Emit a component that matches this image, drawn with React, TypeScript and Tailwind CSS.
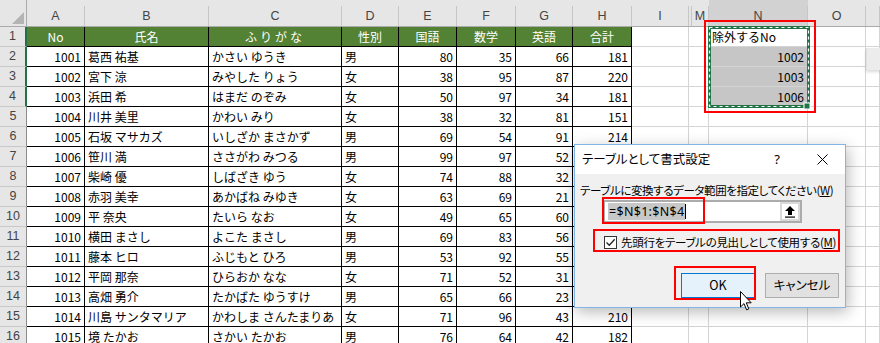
import React from "react";

type Row = [string, string, string, string, number, number, number, number];

const data: Row[] = [
  ["1001", "葛西 祐基", "かさい ゆうき", "男", 80, 35, 66, 181],
  ["1002", "宮下 涼", "みやした りょう", "女", 38, 95, 87, 220],
  ["1003", "浜田 希", "はまだ のぞみ", "女", 50, 97, 34, 181],
  ["1004", "川井 美里", "かわい みり", "女", 38, 32, 81, 151],
  ["1005", "石坂 マサカズ", "いしざか まさかず", "男", 69, 54, 91, 214],
  ["1006", "笹川 満", "ささがわ みつる", "男", 99, 97, 52, 248],
  ["1007", "柴崎 優", "しばざき ゆう", "女", 74, 88, 32, 194],
  ["1008", "赤羽 美幸", "あかばね みゆき", "女", 63, 69, 21, 153],
  ["1009", "平 奈央", "たいら なお", "女", 49, 65, 60, 174],
  ["1010", "横田 まさし", "よこた まさし", "男", 69, 83, 56, 208],
  ["1011", "藤本 ヒロ", "ふじもと ひろ", "男", 53, 92, 55, 200],
  ["1012", "平岡 那奈", "ひらおか なな", "女", 71, 52, 31, 154],
  ["1013", "高畑 勇介", "たかばた ゆうすけ", "男", 65, 66, 23, 154],
  ["1014", "川島 サンタマリア", "かわしま さんたまりあ", "女", 71, 96, 43, 210],
  ["1015", "境 たかお", "さかい たかお", "男", 76, 64, 42, 182],
];

const sheetFont = "font-['Noto_Sans_CJK_JP',sans-serif]";
const uiFont = "font-['Noto_Sans_CJK_JP',sans-serif] [font-feature-settings:'palt']";

function ColHeader() {
  const cols: { l: string; w: string; sel?: boolean }[] = [
    { l: "A", w: "w-[58px]" },
    { l: "B", w: "w-[124px]" },
    { l: "C", w: "w-[133px]" },
    { l: "D", w: "w-[57px]" },
    { l: "E", w: "w-[58px]" },
    { l: "F", w: "w-[59px]" },
    { l: "G", w: "w-[57px]" },
    { l: "H", w: "w-[59px]" },
    { l: "I", w: "w-[57px]" },
    { l: "", w: "w-[3px]" },
    { l: "M", w: "w-[17px]" },
    { l: "N", w: "w-[99px]", sel: true },
    { l: "O", w: "w-[58px]" },
    { l: "", w: "w-[14px]" },
  ];
  return (
    <div className="flex h-[27px] bg-[#e6e6e6] border-b border-[#ababab]">
      <div className="relative w-[27px] shrink-0 border-r border-[#ababab]">
        <div className="absolute right-[2px] bottom-[2px] w-0 h-0 border-l-[12px] border-l-transparent border-b-[12px] border-b-[#b4b4b4]" />
      </div>
      {cols.map((c, i) => (
        <div
          key={i}
          className={`${c.w} shrink-0 flex flex-col justify-end ${c.sel ? "bg-[#d2d2d2]" : ""}`}
        >
          <div className="h-[20px] border-r border-[#c6c6c6] flex items-center justify-center text-[12.5px] text-[#444] font-['Liberation_Sans',sans-serif]">
            {c.l}
          </div>
        </div>
      ))}
    </div>
  );
}

function TCell({
  w,
  children,
  right,
  center,
  green,
  extra = "",
}: {
  w: string;
  children?: React.ReactNode;
  right?: boolean;
  center?: boolean;
  green?: boolean;
  extra?: string;
}) {
  return (
    <div
      className={`${w} shrink-0 h-full border-r border-black overflow-hidden whitespace-nowrap flex items-center px-[3px] ${
        right ? "justify-end" : center ? "justify-center" : "justify-start"
      } ${green ? "bg-[#548235] text-white" : "text-black"} ${extra}`}
    >
      {children}
    </div>
  );
}

function GCell({ w, children, extra = "" }: { w: string; children?: React.ReactNode; extra?: string }) {
  return (
    <div className={`${w} shrink-0 h-full border-r border-[#d4d4d4] flex items-center px-[3px] ${extra}`}>
      {children}
    </div>
  );
}

function RowHead({ n, sel }: { n: number; sel?: boolean }) {
  return (
    <div
      className={`w-[27px] shrink-0 h-[20px] bg-[#e6e6e6] flex items-center justify-center text-[12.5px] text-[#444] font-['Liberation_Sans',sans-serif] border-b border-b-[#c8c8c8] ${
        sel ? "border-r-2 border-r-[#217346]" : "border-r border-r-[#8c8c8c]"
      }`}
    >
      {n}
    </div>
  );
}

function SheetRow({ idx, children, nCell }: { idx: number; children: React.ReactNode; nCell: React.ReactNode }) {
  return (
    <div className="flex h-[20px]">
      <RowHead n={idx} sel={idx <= 4} />
      <div className="flex h-[20px] border-b border-black">{children}</div>
      <div className="flex h-[20px] flex-1 border-b border-[#d4d4d4]">
        <GCell w="w-[57px]" />
        <GCell w="w-[20px]" />
        {nCell}
        <GCell w="w-[58px]" />
        <GCell w="w-[14px]" />
      </div>
    </div>
  );
}

function Sheet() {
  const nVals: Record<number, { text: string; right?: boolean; bg: string }> = {
    1: { text: "除外するNo", bg: "bg-white" },
    2: { text: "1002", right: true, bg: "bg-[#c6c6c6]" },
    3: { text: "1003", right: true, bg: "bg-[#c6c6c6]" },
    4: { text: "1006", right: true, bg: "bg-[#c6c6c6]" },
  };
  const nCell = (i: number) => {
    const v = nVals[i];
    return (
      <GCell w="w-[99px]" extra={`${v ? v.bg : ""} ${v?.right ? "justify-end" : ""} text-black`}>
        {v?.text}
      </GCell>
    );
  };
  return (
    <div className={`${sheetFont} text-[12px]`}>
      <ColHeader />
      <SheetRow idx={1} nCell={nCell(1)}>
        <TCell w="w-[58px]" center green>No</TCell>
        <TCell w="w-[124px]" center green>氏名</TCell>
        <TCell w="w-[133px]" center green extra="tracking-[3px]">ふりがな</TCell>
        <TCell w="w-[57px]" center green>性別</TCell>
        <TCell w="w-[58px]" center green>国語</TCell>
        <TCell w="w-[59px]" center green>数学</TCell>
        <TCell w="w-[57px]" center green>英語</TCell>
        <TCell w="w-[59px]" center green>合計</TCell>
      </SheetRow>
      {data.map((r, i) => (
        <SheetRow key={i} idx={i + 2} nCell={nCell(i + 2)}>
          <TCell w="w-[58px]" right>{r[0]}</TCell>
          <TCell w="w-[124px]">{r[1]}</TCell>
          <TCell w="w-[133px]">{r[2]}</TCell>
          <TCell w="w-[57px]">{r[3]}</TCell>
          <TCell w="w-[58px]" right>{r[4]}</TCell>
          <TCell w="w-[59px]" right>{r[5]}</TCell>
          <TCell w="w-[57px]" right>{r[6]}</TCell>
          <TCell w="w-[59px]" right>{r[7]}</TCell>
        </SheetRow>
      ))}
    </div>
  );
}

function Dialog() {
  return (
    <div
      className={`absolute left-[574px] top-[144px] w-[272px] h-[164px] border border-[#83b5e6] bg-[#f0f0f0] shadow-[2px_4px_14px_rgba(0,0,0,0.28)] flex flex-col ${uiFont} text-[12px] text-black whitespace-nowrap`}
    >
      <div className="h-[29px] bg-white flex items-center pl-[7px] pr-[14px]">
        <span className="flex-1 text-[12.5px]">テーブルとして書式設定</span>
        <span className="w-[20px] text-center text-[13px] mr-[30px] font-['Noto_Sans',sans-serif]">?</span>
        <svg width="11" height="11" viewBox="0 0 11 11" className="mr-[3px]">
          <path d="M0.5 0.5 L10.5 10.5 M10.5 0.5 L0.5 10.5" stroke="#000" strokeWidth="1" />
        </svg>
      </div>
      <div className="pt-[8px] pl-[5px] h-[24px] leading-[16px] text-[11.5px] tracking-[-0.4px]">
        テーブルに変換するデータ範囲を指定してください(<span className="underline">W</span>)
      </div>
      <div className="ml-[28px] mt-[2px] w-[199px] h-[23px] border-2 border-[#acacac] bg-white flex">
        <div className="flex-1 flex items-center pl-[3px]">
          <span className="bg-[#c8c8c8] h-[17px] leading-[17px] px-[1px] text-[12.5px] tracking-[0.3px] font-['Noto_Sans',sans-serif]">=$N$1:$N$4</span>
          <span className="w-[1px] h-[15px] bg-black" />
        </div>
        <div className="w-[20px] bg-[#d9d9d9] p-[2px] flex">
          <div className="flex-1 bg-white flex items-center justify-center">
            <svg width="10" height="12" viewBox="0 0 10 12">
              <path d="M5 0 L10 5 H7 V9 H3 V5 H0 Z" fill="#000" />
              <rect x="0" y="10.5" width="10" height="1.2" fill="#000" />
            </svg>
          </div>
        </div>
      </div>
      <div className="mt-[11px] h-[16px] flex items-center pl-[29px]">
        <div className="w-[13px] h-[13px] border border-[#333] bg-white flex items-center justify-center">
          <svg width="11" height="11" viewBox="0 0 11 11">
            <path d="M1.5 5.5 L4.3 8.3 L9.7 2.2" stroke="#222" strokeWidth="1.3" fill="none" />
          </svg>
        </div>
        <span className="ml-[4px] text-[11.5px] leading-[16px] tracking-[-0.3px]">
          先頭行をテーブルの見出しとして使用する(<span className="underline">M</span>)
        </span>
      </div>
      <div className="mt-[23px] flex justify-end gap-[10px] pr-[6px]">
        <div className="w-[74px] h-[25px] border border-[#0078d7] bg-[#e5f1fb] flex items-center justify-center text-[12.5px]">
          OK
        </div>
        <div className="w-[74px] h-[25px] border border-[#adadad] bg-[#e1e1e1] flex items-center justify-center text-[12.5px]">
          キャンセル
        </div>
      </div>
    </div>
  );
}

export default function App() {
  return (
    <div className="relative w-[880px] h-[343px] overflow-hidden bg-white">
      <Sheet />
      <svg className="absolute left-[708px] top-[26px]" width="103" height="83" viewBox="0 0 103 83">
        <rect x="1.5" y="1.5" width="99" height="79" fill="none" stroke="#217346" strokeWidth="3" />
        <rect x="1.5" y="1.5" width="99" height="79" fill="none" stroke="#ffffff" strokeWidth="1.2" strokeDasharray="3 3" />
        <rect x="96" y="77" width="6" height="6" fill="#217346" stroke="#fff" strokeWidth="1" />
      </svg>
      <div className="absolute left-[866px] top-[48px] w-[14px] h-[22px] bg-[#ececec] border-l border-[#e0e0e0] shadow-[0_2px_3px_rgba(0,0,0,0.15)]" />
      <Dialog />
      <div className="absolute left-[704px] top-[20px] w-[112px] h-[93px] border-2 border-[#ff0000]" />
      <div className="absolute left-[602px] top-[197px] w-[103px] h-[27px] border-2 border-[#ff0000]" />
      <div className="absolute left-[593px] top-[229px] w-[247px] h-[23px] border-2 border-[#ff0000]" />
      <div className="absolute left-[674px] top-[266px] w-[82px] h-[34px] border-2 border-[#ff0000]" />
      <svg className="absolute left-[740px] top-[291px]" width="13" height="20" viewBox="0 0 13 20">
        <path
          d="M0.5 0.5 L0.5 16 L4 12.6 L6.6 18.8 L8.8 17.9 L6.3 11.8 L11.2 11.8 Z"
          fill="#fff"
          stroke="#000"
          strokeWidth="1"
          strokeLinejoin="round"
        />
      </svg>
    </div>
  );
}
